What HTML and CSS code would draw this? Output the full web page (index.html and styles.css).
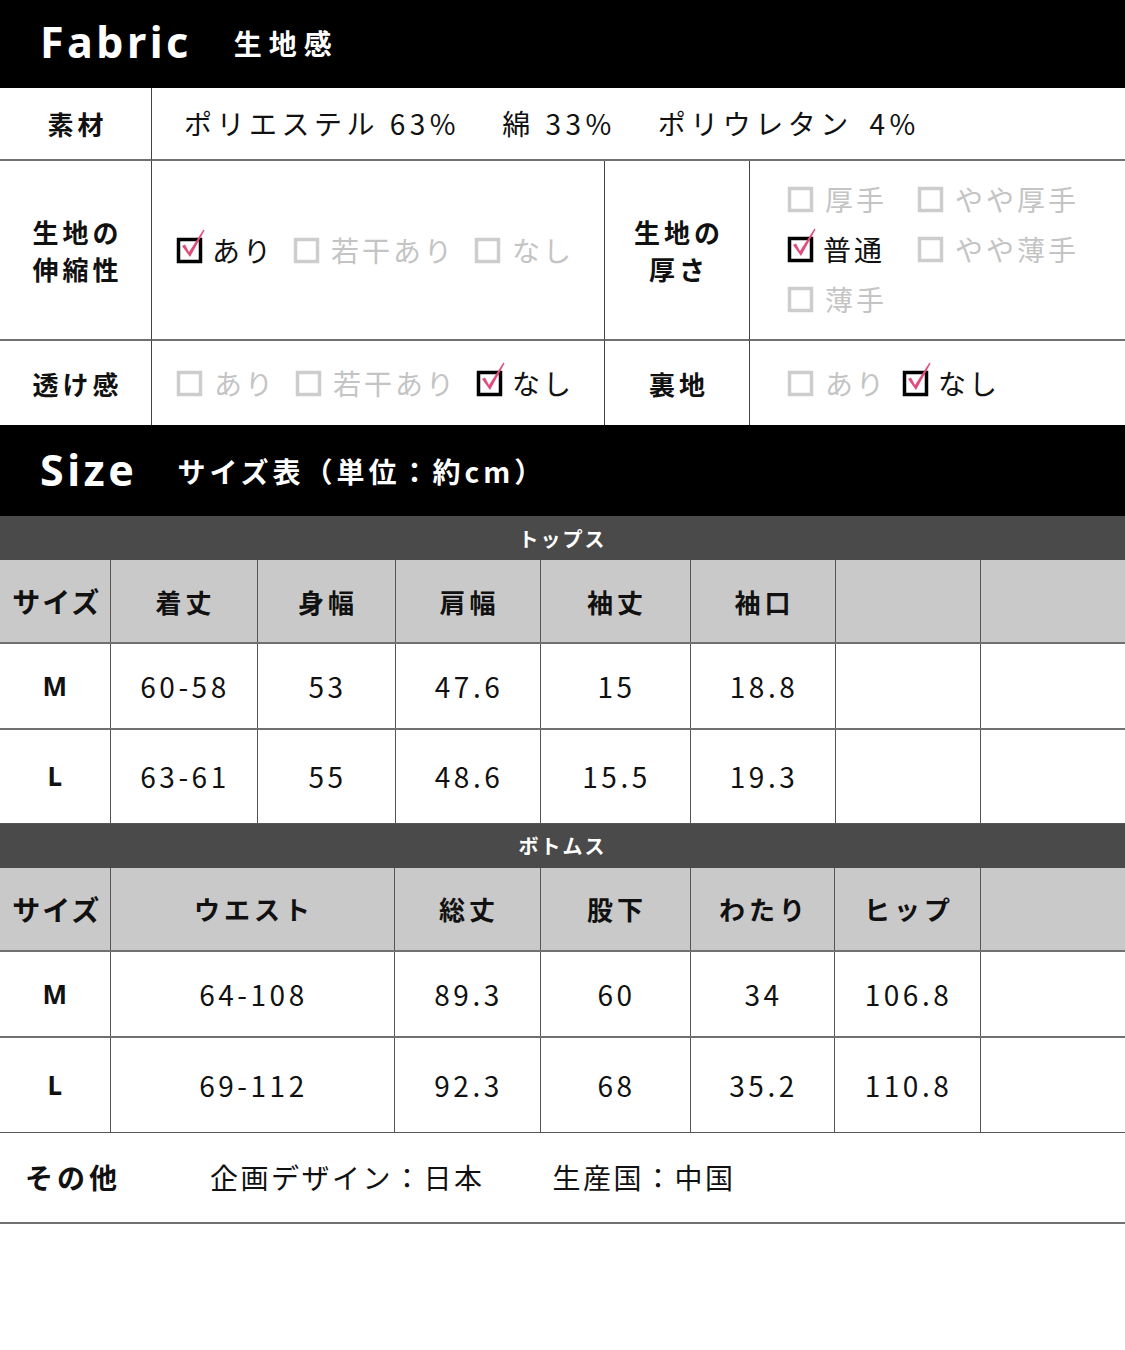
FILE: index.html
```html
<!DOCTYPE html>
<html lang="ja">
<head>
<meta charset="utf-8">
<title>Fabric / Size</title>
<link rel="stylesheet" href="styles.css">
</head>
<body>
<div class="page">
  <div class="sec-head">
    <span class="en">Fabric</span><span class="ja">生地感</span>
  </div>

  <div class="fabric">
    <div class="lbl row1">素材</div>
    <div class="val row1 wide material">
      <span>ポリエステル 63%</span><span>綿 33%</span><span>ポリウレタン <span class="pct">4%</span></span>
    </div>

    <div class="lbl row2">生地の<br>伸縮性</div>
    <div class="val row2 opts">
      <span class="opt on"><svg class="cb" viewBox="0 0 25 25"><rect x="1.5" y="1.5" width="22" height="22"/><path class="ck" d="M5 8 L8 6.5 L12 14 L26.5 -8.5 L27.5 -7.5 L13 19 Z"/></svg>あり</span>
      <span class="opt"><svg class="cb" viewBox="0 0 25 25"><rect x="1.5" y="1.5" width="22" height="22"/></svg>若干あり</span>
      <span class="opt"><svg class="cb" viewBox="0 0 25 25"><rect x="1.5" y="1.5" width="22" height="22"/></svg>なし</span>
    </div>
    <div class="lbl row2">生地の<br>厚さ</div>
    <div class="val row2 last thick">
      <span class="opt"><svg class="cb" viewBox="0 0 25 25"><rect x="1.5" y="1.5" width="22" height="22"/></svg>厚手</span>
      <span class="opt"><svg class="cb" viewBox="0 0 25 25"><rect x="1.5" y="1.5" width="22" height="22"/></svg>やや厚手</span>
      <span class="opt on"><svg class="cb" viewBox="0 0 25 25"><rect x="1.5" y="1.5" width="22" height="22"/><path class="ck" d="M5 8 L8 6.5 L12 14 L26.5 -8.5 L27.5 -7.5 L13 19 Z"/></svg>普通</span>
      <span class="opt"><svg class="cb" viewBox="0 0 25 25"><rect x="1.5" y="1.5" width="22" height="22"/></svg>やや薄手</span>
      <span class="opt"><svg class="cb" viewBox="0 0 25 25"><rect x="1.5" y="1.5" width="22" height="22"/></svg>薄手</span>
    </div>

    <div class="lbl row3">透け感</div>
    <div class="val row3 opts">
      <span class="opt"><svg class="cb" viewBox="0 0 25 25"><rect x="1.5" y="1.5" width="22" height="22"/></svg>あり</span>
      <span class="opt"><svg class="cb" viewBox="0 0 25 25"><rect x="1.5" y="1.5" width="22" height="22"/></svg>若干あり</span>
      <span class="opt on"><svg class="cb" viewBox="0 0 25 25"><rect x="1.5" y="1.5" width="22" height="22"/><path class="ck" d="M5 8 L8 6.5 L12 14 L26.5 -8.5 L27.5 -7.5 L13 19 Z"/></svg>なし</span>
    </div>
    <div class="lbl row3">裏地</div>
    <div class="val row3 last opts lining">
      <span class="opt"><svg class="cb" viewBox="0 0 25 25"><rect x="1.5" y="1.5" width="22" height="22"/></svg>あり</span>
      <span class="opt on"><svg class="cb" viewBox="0 0 25 25"><rect x="1.5" y="1.5" width="22" height="22"/><path class="ck" d="M5 8 L8 6.5 L12 14 L26.5 -8.5 L27.5 -7.5 L13 19 Z"/></svg>なし</span>
    </div>
  </div>

  <div class="sec-head size-head">
    <span class="en">Size</span><span class="ja">サイズ表（単位：約cm）</span>
  </div>

  <div class="sub">トップス</div>
  <table class="sz tops">
    <colgroup>
      <col class="w110"><col class="w147"><col class="w138"><col class="w145"><col class="w150"><col class="w145"><col class="w145"><col class="w145">
    </colgroup>
    <tr class="hd"><th>サイズ</th><th>着丈</th><th>身幅</th><th>肩幅</th><th>袖丈</th><th>袖口</th><th></th><th></th></tr>
    <tr class="m"><th>M</th><td>60-58</td><td>53</td><td>47.6</td><td>15</td><td>18.8</td><td></td><td></td></tr>
    <tr class="l"><th>L</th><td>63-61</td><td>55</td><td>48.6</td><td>15.5</td><td>19.3</td><td></td><td></td></tr>
  </table>

  <div class="sub">ボトムス</div>
  <table class="sz bottoms">
    <colgroup>
      <col class="w110"><col class="w284"><col class="w146"><col class="w150"><col class="w144"><col class="w146"><col class="w145">
    </colgroup>
    <tr class="hd"><th>サイズ</th><th>ウエスト</th><th>総丈</th><th>股下</th><th>わたり</th><th>ヒップ</th><th></th></tr>
    <tr class="m"><th>M</th><td>64-108</td><td>89.3</td><td>60</td><td>34</td><td>106.8</td><td></td></tr>
    <tr class="l"><th>L</th><td>69-112</td><td>92.3</td><td>68</td><td>35.2</td><td>110.8</td><td></td></tr>
  </table>

  <div class="other">
    <span class="olbl">その他</span>
    <span class="oval">企画デザイン：日本</span>
    <span class="oval">生産国：中国</span>
  </div>
</div>
</body>
</html>
```

FILE: styles.css
```css
* { box-sizing: border-box; }
html, body { margin: 0; padding: 0; background: #fff; }
body {
  font-family: "Noto Sans CJK JP", "Noto Sans", sans-serif;
  color: #111;
}
.page { width: 1125px; }

.sec-head {
  background: #000;
  color: #fff;
  height: 88px;
  display: flex;
  align-items: center;
  padding-left: 40px;
  padding-bottom: 5px;
}
.sec-head .en {
  font-family: "Noto Sans", sans-serif;
  font-weight: 700;
  font-size: 43px;
  letter-spacing: 3.5px;
  line-height: 1;
}
.sec-head .ja {
  font-weight: 700;
  font-size: 28px;
  letter-spacing: 7px;
  margin-left: 42px;
  margin-top: 2px;
}
.size-head { height: 91px; padding-bottom: 2px; }
.size-head .ja { margin-left: 40px; letter-spacing: 4px; }

/* fabric grid */
.fabric {
  display: grid;
  grid-template-columns: 152px 453px 145px 1fr;
  grid-template-rows: 73px 180px 84px;
}
.fabric > div {
  display: flex;
  align-items: center;
  border-right: 1px solid #444;
}
.fabric .row1, .fabric .row2 { border-bottom: 2px solid #707070; }
.fabric .last { border-right: none; }
.fabric .wide { grid-column: 2 / 5; border-right: none; }
.lbl {
  justify-content: center;
  text-align: center;
  font-weight: 700;
  font-size: 26px;
  letter-spacing: 4px;
  line-height: 37px;
  padding-left: 4px;
}
.material {
  padding-left: 32px;
  font-size: 28px;
  letter-spacing: 4.5px;
  gap: 42px;
  padding-bottom: 2px;
}
.pct { margin-left: 6px; }

.opts { padding-left: 25px; gap: 20px; }
.opt {
  display: inline-flex;
  align-items: center;
  font-size: 28px;
  letter-spacing: 3px;
  color: #c4c4c4;
  line-height: 1;
}
.opt.on { color: #111; }
.cb {
  width: 25px;
  height: 25px;
  overflow: visible;
  margin-right: 12px;
  flex: none;
}
.cb rect { fill: none; stroke: #cdcdcd; stroke-width: 3.5; }
.opt.on .cb rect { stroke: #000; }
.ck { fill: #e04d7a; }
.opt.on .cb { margin-right: 10px; }

.thick {
  display: grid !important;
  grid-template-columns: 130px auto;
  grid-auto-rows: 50px;
  align-content: center;
  padding-left: 38px;
  padding-bottom: 2px;
}
.lining { padding-left: 38px; gap: 16px; }

/* size tables */
.sub {
  background: #4a4a4a;
  color: #fff;
  height: 44px;
  display: flex;
  align-items: center;
  justify-content: center;
  font-weight: 700;
  font-size: 20px;
  letter-spacing: 2px;
}
.sz {
  width: 1125px;
  border-collapse: collapse;
  table-layout: fixed;
}
.w110 { width: 110px; } .w147 { width: 147px; } .w138 { width: 138px; }
.w145 { width: 145px; } .w150 { width: 150px; } .w284 { width: 284px; }
.w146 { width: 146px; } .w144 { width: 144px; }
.sz th, .sz td {
  border-left: 1px solid #555;
  border-right: 1px solid #555;
  border-bottom: 2px solid #707070;
  text-align: center;
  padding: 0;
}
.sz tr > :first-child { border-left: none; }
.sz tr > :last-child { border-right: none; }
.sz tr.l > * { border-bottom: none; }
.sz .hd { height: 83px; background: #c9c9c9; }
.sz .hd th { font-size: 26px; font-weight: 700; letter-spacing: 4px; padding-left: 4px; }
.sz .hd th:first-child { font-size: 28px; letter-spacing: 2px; }
.sz .m { height: 86px; }
.sz .l { height: 94px; }
.sz tr.m th, .sz tr.l th {
  font-family: "Noto Sans", sans-serif;
  font-weight: 700;
  font-size: 26px;
}
.sz td {
  font-size: 28px;
  letter-spacing: 3.5px;
  padding-left: 3px;
  font-weight: 400;
}
.bottoms .l { height: 95px; }
.tops { border-bottom: 1px solid #555; }

.other {
  height: 92px;
  border-top: 1px solid #555;
  border-bottom: 2px solid #707070;
  display: flex;
  align-items: center;
  padding-left: 25px;
  font-size: 28px;
}
.olbl { font-weight: 700; width: 185px; letter-spacing: 4px; }
.oval { letter-spacing: 2.5px; margin-right: 68px; }
```
